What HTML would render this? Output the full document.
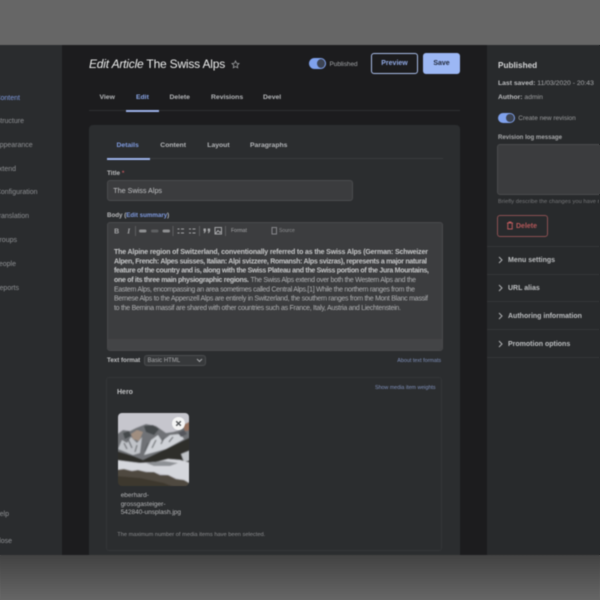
<!DOCTYPE html>
<html><head><meta charset="utf-8">
<style>
html,body{margin:0;padding:0;width:600px;height:600px;overflow:hidden;background:#666}
body{font-family:"Liberation Sans",sans-serif;position:relative}
#wrap{position:absolute;left:0;top:0;width:600px;height:600px;filter:blur(.4px)}
.a{position:absolute;white-space:nowrap}
.b{position:absolute}
.nav{font-size:7px;color:#8f9194;left:-5px;width:67px;overflow:hidden;height:12px;line-height:12px}
.nav span{position:absolute;white-space:nowrap}
.tab{font-size:6.800px;line-height:10px;font-weight:bold;color:#b4b6b9}
.acc{font-size:7px;line-height:10px;font-weight:bold;color:#bdbfc1}
</style></head><body><div id="wrap">
<div class="b" style="left:-5px;top:-5px;width:610px;height:50px;background:#666"></div>
<div class="b" style="left:-5px;top:555px;width:610px;height:50px;background:linear-gradient(#424242,#666 90%)"></div>
<div class="b" style="left:-5px;top:45px;width:67px;height:510px;background:#2a2c2e"></div>
<div class="b" style="left:62px;top:45px;width:425px;height:510px;background:#1c1c1e"></div>
<div class="b" style="left:487px;top:45px;width:118px;height:510px;background:#282a2c"></div>

<!-- sidebar -->
<div class="a nav" style="top:92.500px;color:#7f9be0"><span style="right:42px">Content</span></div>
<div class="a nav" style="top:116.200px"><span style="right:38px">Structure</span></div>
<div class="a nav" style="top:140.200px"><span style="right:29.300px">Appearance</span></div>
<div class="a nav" style="top:163.500px"><span style="right:46px">Extend</span></div>
<div class="a nav" style="top:187.200px"><span style="right:24.500px">Configuration</span></div>
<div class="a nav" style="top:211.200px"><span style="right:33px">Translation</span></div>
<div class="a nav" style="top:235.200px"><span style="right:45px">Groups</span></div>
<div class="a nav" style="top:259.200px"><span style="right:46px">People</span></div>
<div class="a nav" style="top:283.200px"><span style="right:43px">Reports</span></div>
<div class="a nav" style="top:508.500px"><span style="right:53px">Help</span></div>
<div class="a nav" style="top:536.200px"><span style="right:50px">Close</span></div>

<!-- header -->
<div class="a" style="left:89px;top:55px;font-size:12px;line-height:18px;color:#eceded;letter-spacing:-.2px"><i>Edit Article</i> The Swiss Alps</div>
<svg class="b" style="left:231px;top:59.500px" width="9" height="9" viewBox="0 0 24 24" fill="none" stroke="#a5a7a9" stroke-width="2"><path d="M12 2.500l2.900 6.200 6.600.8-4.900 4.600 1.300 6.700L12 17.500l-5.900 3.300 1.300-6.700-4.900-4.600 6.600-.8z"/></svg>
<div class="b" style="left:309px;top:58px;width:17px;height:11px;border-radius:6px;background:#7fa1ec"></div>
<div class="b" style="left:317px;top:59px;width:8px;height:9px;border-radius:50%;background:#3c4352"></div>
<div class="a" style="left:329.500px;top:60px;font-size:6.400px;line-height:9px;color:#a3a5a8">Published</div>
<div class="b" style="left:371px;top:53px;width:45px;height:19px;border:1px solid #a9bde9;border-radius:3px;background:#1c1c1e;color:#90a9e4;font-size:7px;font-weight:bold;text-align:center;line-height:20.500px">Preview</div>
<div class="b" style="left:423px;top:53px;width:37px;height:21px;border-radius:3px;background:#9cb7f4;color:#1f2638;font-size:7px;font-weight:bold;text-align:center;line-height:22.500px">Save</div>

<!-- primary tabs -->
<div class="a tab" style="left:99.500px;top:92.800px">View</div>
<div class="a tab" style="left:136px;top:92.800px;color:#89a5e6">Edit</div>
<div class="a tab" style="left:169.500px;top:92.800px">Delete</div>
<div class="a tab" style="left:211px;top:92.800px">Revisions</div>
<div class="a tab" style="left:263px;top:92.800px">Devel</div>
<div class="b" style="left:89px;top:110px;width:371px;height:1px;background:#2e2f31"></div>
<div class="b" style="left:126px;top:110px;width:33px;height:1.500px;background:#9cb2e8"></div>

<!-- card -->
<div class="b" style="left:89px;top:125px;width:371px;height:430px;background:#2b2d2f;border-radius:4px 4px 0 0"></div>
<div class="a tab" style="left:116.500px;top:141.300px;color:#7f9be0">Details</div>
<div class="a tab" style="left:160.300px;top:141.300px">Content</div>
<div class="a tab" style="left:207.300px;top:141.300px">Layout</div>
<div class="a tab" style="left:250px;top:141.300px">Paragraphs</div>
<div class="b" style="left:107px;top:158px;width:336px;height:1px;background:#393b3d"></div>
<div class="b" style="left:107px;top:158px;width:43px;height:1.500px;background:#9cb2e8"></div>

<div class="a" style="left:107px;top:169px;font-size:6.400px;line-height:9px;font-weight:bold;color:#b9babc">Title <span style="color:#b2555a">*</span></div>
<div class="b" style="left:107px;top:180px;width:244px;height:19px;background:#3b3c3e;border:1px solid #4a4b4d;border-radius:3px"></div>
<div class="a" style="left:113.300px;top:185.300px;font-size:7.200px;line-height:11px;color:#c3c4c6">The Swiss Alps</div>

<div class="a" style="left:107px;top:210.500px;font-size:6.200px;line-height:9px;font-weight:bold;color:#b9babc">Body (<span style="color:#7f9be0">Edit summary</span>)</div>

<!-- editor -->
<div class="b" style="left:107px;top:222px;width:334px;height:127px;background:#3c3d3f;border:1px solid #48494b;border-radius:3px"></div>
<div class="b" style="left:108px;top:339px;width:334px;height:10.500px;background:#434446;border-radius:0 0 3px 3px"></div>
<svg class="b" style="left:108px;top:223px" width="180" height="16" viewBox="0 0 180 16" fill="none" stroke="#a5a6a8" stroke-width="1">
<text x="8.700" y="10.500" text-anchor="middle" font-family="Liberation Sans" font-size="7" font-weight="bold" fill="#a5a6a8" stroke="none">B</text>
<text x="20.700" y="10.500" text-anchor="middle" font-family="Liberation Serif" font-size="7.500" font-style="italic" font-weight="bold" fill="#a5a6a8" stroke="none">I</text>
<path d="M27.500 3v10M65 3v10M91.500 3v10M117.500 3v10" stroke="#5d5e60"/>
<path d="M32.500 8h4.500" stroke="#8e8f91" stroke-width="3" stroke-linecap="round"/>
<path d="M44.500 8h4.500" stroke="#5e5f61" stroke-width="3" stroke-linecap="round"/>
<path d="M56 8h4.500" stroke="#8e8f91" stroke-width="3" stroke-linecap="round"/>
<path d="M73 6h3M73 10h3M69.500 6h2M69.500 10h2M84.500 6h3M84.500 10h3M81 6h2M81 10h2" stroke="#a5a6a8" stroke-width="1.100"/>
<path d="M95.500 5.500h2.400v2.600l-1.200 2h-1l.7-2h-.9zM99.700 5.500h2.400v2.600l-1.200 2h-1l.7-2h-.9z" fill="#a5a6a8" stroke="none"/>
<rect x="107" y="4.500" width="6.500" height="6.500" stroke="#a5a6a8"/><path d="M107.500 10.500l2.500-3 2 2 1-1" stroke="#a5a6a8"/>
<rect x="164" y="4.500" width="4.500" height="6.500" stroke="#85868a"/>
</svg>
<div class="a" style="left:231px;top:228px;font-size:5px;line-height:7px;color:#a9aaac">Format</div>
<div class="a" style="left:279px;top:228px;font-size:5px;line-height:7px;color:#8e8f91">Source</div>

<svg class="b" style="left:0;top:0" width="600" height="600" viewBox="0 0 600 600" font-family="Liberation Sans" font-size="7" fill="#b2b3b5">
<g font-weight="bold" fill="#c8c9ca">
<text x="114" y="254" textLength="314" lengthAdjust="spacing">The Alpine region of Switzerland, conventionally referred to as the Swiss Alps (German: Schweizer</text>
<text x="114" y="263.400" textLength="313" lengthAdjust="spacing">Alpen, French: Alpes suisses, Italian: Alpi svizzere, Romansh: Alps svizras), represents a major natural</text>
<text x="114" y="272.700" textLength="315" lengthAdjust="spacing">feature of the country and is, along with the Swiss Plateau and the Swiss portion of the Jura Mountains,</text>
<text x="114" y="282" textLength="135" lengthAdjust="spacing">one of its three main physiographic regions.</text>
</g>
<text x="250.500" y="282" textLength="165.500" lengthAdjust="spacing">The Swiss Alps extend over both the Western Alps and the</text>
<text x="114" y="291.400" textLength="301" lengthAdjust="spacing">Eastern Alps, encompassing an area sometimes called Central Alps.[1] While the northern ranges from the</text>
<text x="114" y="300.700" textLength="314" lengthAdjust="spacing">Bernese Alps to the Appenzell Alps are entirely in Switzerland, the southern ranges from the Mont Blanc massif</text>
<text x="114" y="310" textLength="287" lengthAdjust="spacing">to the Bernina massif are shared with other countries such as France, Italy, Austria and Liechtenstein.</text>
</svg>

<div class="a" style="left:107px;top:356px;font-size:6.200px;line-height:9px;font-weight:bold;color:#bfc0c2">Text format</div>
<div class="b" style="left:144px;top:355px;width:60px;height:9px;background:#37393b;border:1px solid #4a4c4e;border-radius:3px"></div>
<div class="a" style="left:147.500px;top:355.500px;font-size:6px;line-height:10px;color:#aaabad">Basic HTML</div>
<svg class="b" style="left:196px;top:358px" width="7" height="5" viewBox="0 0 7 5" fill="none" stroke="#a5a6a8" stroke-width="1"><path d="M1 1l2.500 2.500L6 1"/></svg>
<div class="a" style="left:397.300px;top:357px;font-size:5.400px;line-height:8px;color:#7f90ba">About text formats</div>

<!-- hero -->
<div class="b" style="left:106px;top:377px;width:334px;height:172px;border:1px solid #333537;border-radius:3px"></div>
<div class="a" style="left:117px;top:387.500px;font-size:7px;line-height:10px;font-weight:bold;color:#bfc0c2">Hero</div>
<div class="a" style="left:375px;top:384px;font-size:5.350px;line-height:8px;color:#7f90ba">Show media item weights</div>

<svg class="b" style="left:118.300px;top:412.700px;border-radius:4px" width="71" height="73" viewBox="0 0 71 73">
<defs><filter id="f" x="-5%" y="-5%" width="110%" height="110%"><feGaussianBlur stdDeviation=".6"/></filter></defs>
<g filter="url(#f)">
<rect x="-2" y="-2" width="75" height="77" fill="#c6c6cd"/>
<path d="M-2 22L5 17 12 18 18 15 28 11 38 13 48 20 55 19 62 17 73 9V30L25 50-2 40z" fill="#6f7276"/>
<path d="M0 36L4 27 9 30 13 24 19 30 24 24 22 40 15 42z" fill="#c0c3c8"/>
<path d="M26 42L33 27 40 22 44 28 52 22 62 21 66 26 48 36z" fill="#cfd2d7"/>
<path d="M13 21l6-4 6 2-4 9-6-2z" fill="#a08e80"/>
<path d="M26 13l9-1 6 4-5 6-8-3z" fill="#45484b"/>
<path d="M5 20l6-2 2 5-6 3z" fill="#45484b"/>
<path d="M60 20l6-3 3 4-6 3z" fill="#54575b"/>
<path d="M65 12l8-4v9l-6 1z" fill="#95705d"/>
<path d="M6 30l3 6M10 26l4 9M19 32l-2 7M30 30l-3 8M38 27l-4 8M46 25l-3 6M55 24l-4 5" stroke="#5a5d61" stroke-width="1.100" fill="none"/>
<path d="M-2 38L15 43 25 47 48 36 73 24V52H-2z" fill="#2f2e2a"/>
<path d="M63 41l10-4v10l-7 2z" fill="#bfc2c6"/>
<path d="M-2 47L22 50 38 49 50 46 62 47 73 50V71L50 62 28 58-2 57z" fill="#d5d7dc"/>
<path d="M28 50L46 48 60 50 52 53 36 53z" fill="#8e9195"/>
<path d="M-2 57L6 56 14 58 20 57 28 59 36 59 42 62 50 62 58 66 66 67 73 71V75H-2z" fill="#50493f"/>
<path d="M-2 63L22 65 46 70 58 75H-2z" fill="#3d382f"/>
</g>
</svg>
<div class="b" style="left:172px;top:417px;width:13px;height:13px;border-radius:50%;background:#f4f4f4"></div>
<svg class="b" style="left:175px;top:420px" width="7" height="7" viewBox="0 0 7 7" fill="none" stroke="#55575a" stroke-width="1.400"><path d="M1.200 1.200l4.600 4.600M5.800 1.200L1.200 5.800"/></svg>
<div class="a" style="left:120.700px;top:492px;font-size:6.500px;line-height:8.500px;color:#b4b5b7">eberhard-<br>grossgasteiger-<br>542840-unsplash.jpg</div>
<div class="a" style="left:117.300px;top:531px;font-size:5.700px;line-height:8px;color:#8a8b8d">The maximum number of media items have been selected.</div>

<!-- right panel -->
<div class="a" style="left:498px;top:59.700px;font-size:8.200px;line-height:11px;font-weight:bold;color:#d4d5d6">Published</div>
<div class="a" style="left:498px;top:78.500px;font-size:6.800px;line-height:9px;color:#a9aaac"><b style="color:#bdbec0">Last saved:</b> 11/03/2020 - 20:43</div>
<div class="a" style="left:498px;top:92.500px;font-size:6.800px;line-height:9px;color:#9fa0a2"><b style="color:#bdbec0">Author:</b> admin</div>
<div class="b" style="left:497.500px;top:112.500px;width:17px;height:10.500px;border-radius:6px;background:#7fa1ec"></div>
<div class="b" style="left:505.500px;top:113.500px;width:8px;height:8.500px;border-radius:50%;background:#3c4352"></div>
<div class="a" style="left:518.300px;top:114px;font-size:6.500px;line-height:9px;color:#9b9c9e">Create new revision</div>
<div class="a" style="left:498px;top:132.500px;font-size:6.100px;line-height:9px;font-weight:bold;color:#a9aaac">Revision log message</div>
<div class="b" style="left:497px;top:144px;width:110px;height:49px;background:#3b3c3e;border:1px solid #4a4b4d;border-radius:3px"></div>
<div class="a" style="left:498px;top:197.500px;font-size:5.700px;line-height:8px;color:#77787a;letter-spacing:.05px">Briefly describe the changes you have made.</div>
<div class="b" style="left:497px;top:215px;width:49px;height:19.500px;border:1px solid #8b5052;border-radius:3px"></div>
<svg class="b" style="left:505.500px;top:221px" width="8" height="9" viewBox="0 0 8 9" fill="none" stroke="#b9595b" stroke-width="1"><path d="M1 2h6M3 2V1h2v1M1.800 2.500v5.500h4.400V2.500"/></svg>
<div class="a" style="left:516px;top:221.500px;font-size:7px;line-height:10px;font-weight:bold;color:#b5585a">Delete</div>

<div class="b" style="left:487px;top:246px;width:118px;height:1px;background:#343638"></div>
<div class="b" style="left:487px;top:274px;width:118px;height:1px;background:#343638"></div>
<div class="b" style="left:487px;top:301px;width:118px;height:1px;background:#343638"></div>
<div class="b" style="left:487px;top:329px;width:118px;height:1px;background:#343638"></div>
<div class="b" style="left:487px;top:357px;width:118px;height:1px;background:#343638"></div>
<svg class="b" style="left:498px;top:256px" width="5" height="8" viewBox="0 0 5 8" fill="none" stroke="#b0b1b3"><path d="M1 1l3 3-3 3"/></svg>
<svg class="b" style="left:498px;top:284px" width="5" height="8" viewBox="0 0 5 8" fill="none" stroke="#b0b1b3"><path d="M1 1l3 3-3 3"/></svg>
<svg class="b" style="left:498px;top:312px" width="5" height="8" viewBox="0 0 5 8" fill="none" stroke="#b0b1b3"><path d="M1 1l3 3-3 3"/></svg>
<svg class="b" style="left:498px;top:339.500px" width="5" height="8" viewBox="0 0 5 8" fill="none" stroke="#b0b1b3"><path d="M1 1l3 3-3 3"/></svg>
<div class="a acc" style="left:508px;top:256.300px">Menu settings</div>
<div class="a acc" style="left:508px;top:284px">URL alias</div>
<div class="a acc" style="left:508px;top:312px">Authoring information</div>
<div class="a acc" style="left:508px;top:339.500px">Promotion options</div>
</div>
<div class="b" style="left:599px;top:45px;width:1px;height:510px;background:#282a2c"></div>
<div class="b" style="left:599px;top:145px;width:1px;height:49px;background:#3b3c3e"></div>
<div class="b" style="left:0;top:555px;width:1px;height:45px;background:linear-gradient(#424242,#666 90%)"></div>
<div class="b" style="left:599px;top:555px;width:1px;height:45px;background:linear-gradient(#424242,#666 90%)"></div>
</body></html>
